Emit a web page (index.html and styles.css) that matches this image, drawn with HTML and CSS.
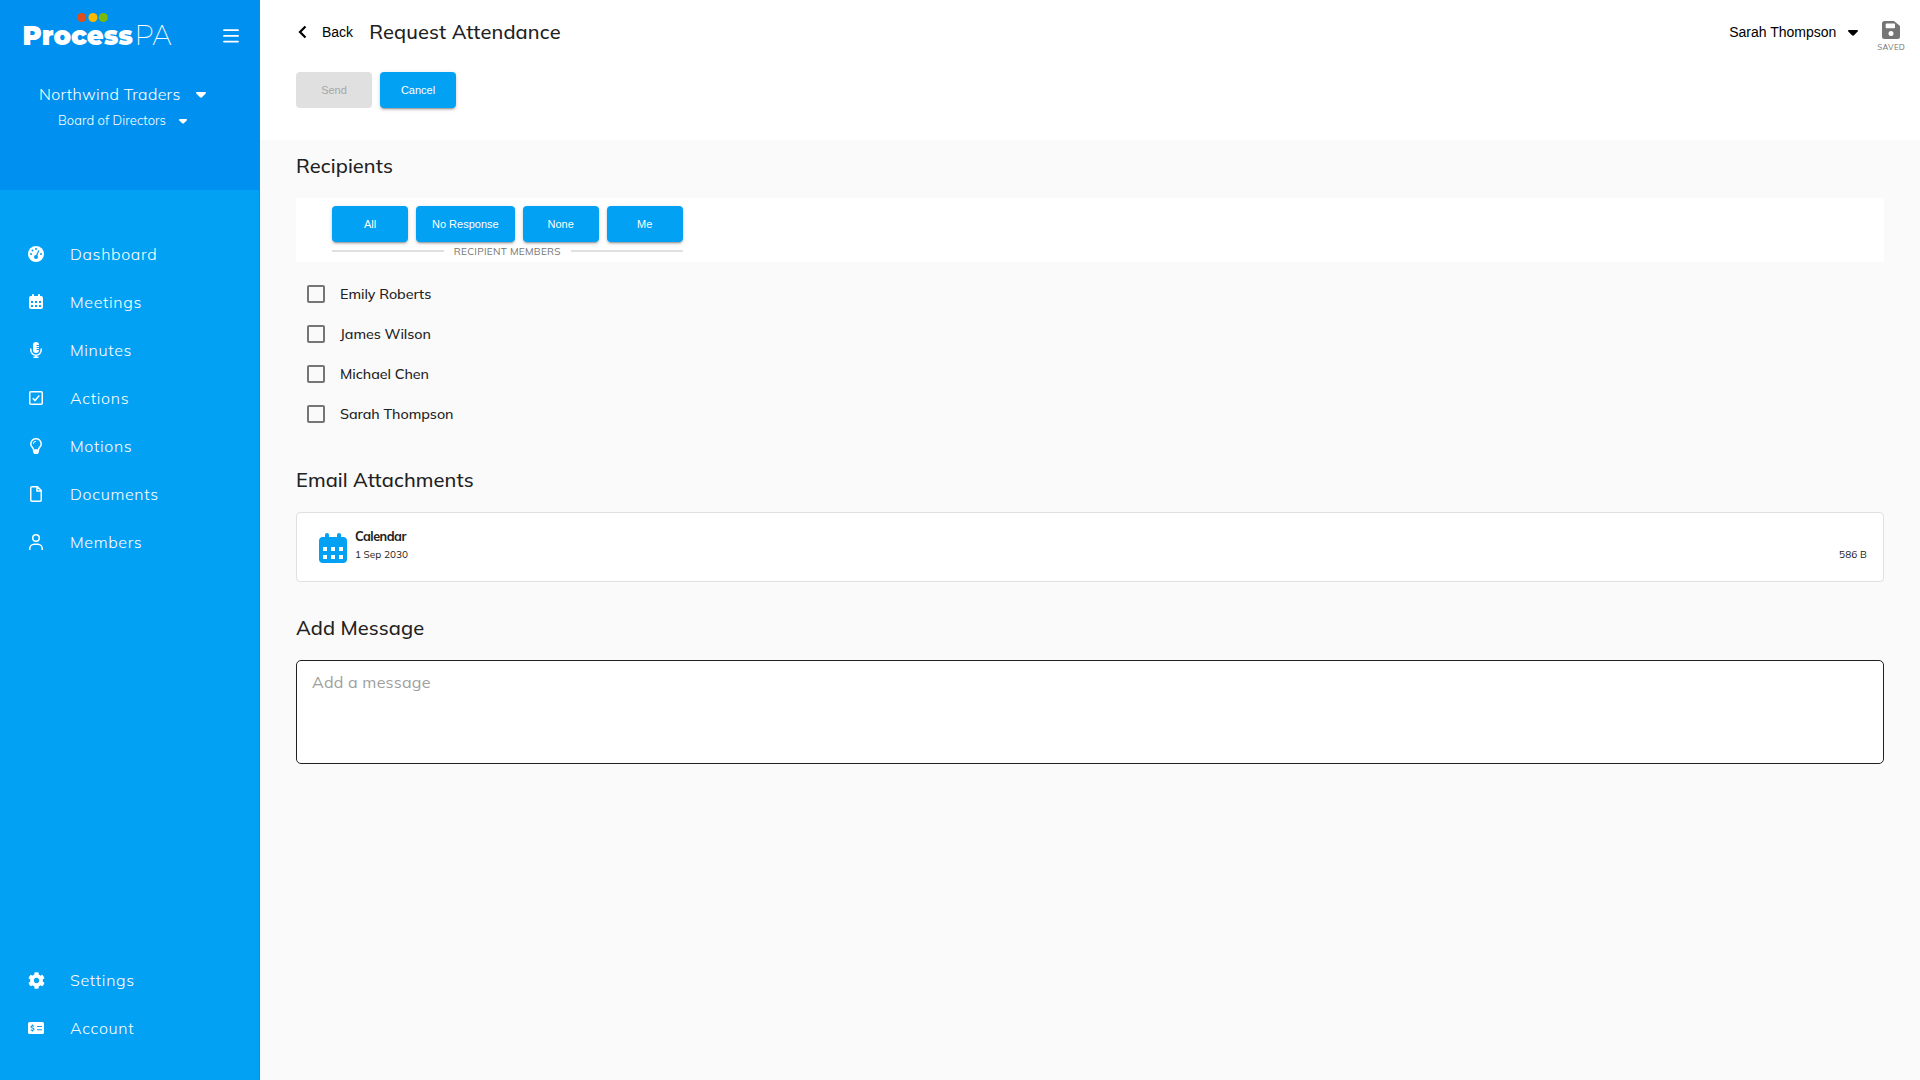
FILE: index.html
```html
<!DOCTYPE html>
<html lang="en">
<head>
<meta charset="utf-8">
<title>Request Attendance</title>
<link rel="stylesheet" href="styles.css">
</head>
<body>
<svg class="defs" aria-hidden="true">
  <symbol id="calendar" viewBox="0 0 28 30"><path fill-rule="evenodd" d="M6 4V2a2 2 0 0 1 4 0v2h8V2a2 2 0 0 1 4 0v2h2a4 4 0 0 1 4 4v18a4 4 0 0 1-4 4H4a4 4 0 0 1-4-4V8a4 4 0 0 1 4-4zM4 14v4h4v-4zm8 0v4h4v-4zm8 0v4h4v-4zM4 22v4h4v-4zm8 0v4h4v-4zm8 0v4h4v-4z"/></symbol>
  <symbol id="caret" viewBox="0 0 10 6"><path d="M1 0h8c1 0 1.300 1 .7 1.600l-3.700 3.700c-.6.6-1.400.6-2 0L.3 1.600C-.3 1 0 0 1 0z"/></symbol>
</svg>
<div class="app">
  <aside class="sidebar">
    <div class="brand">
      <div class="brand-bar">
        <svg class="logo" width="156" height="50" viewBox="0 0 156 50">
          <circle cx="60.700" cy="9.500" r="4.500" fill="#e04e1b"/><circle cx="72" cy="9.500" r="4.500" fill="#fdb900"/><circle cx="82.300" cy="9.500" r="4.500" fill="#7aba0a"/>
          <text class="logo-bold" x="1.500" y="36.500" textLength="110.500" lengthAdjust="spacingAndGlyphs">Process</text>
          <text class="logo-thin" x="113.500" y="36.500" textLength="37" lengthAdjust="spacingAndGlyphs">PA</text>
        </svg>
        <svg class="burger" width="16" height="14" viewBox="0 0 16 14"><path d="M1 1.200h14M1 6.900h14M1 12.600h14"/></svg>
      </div>
      <div class="org"><span>Northwind Traders</span><svg width="10" height="6"><use href="#caret"/></svg></div>
      <div class="board"><span>Board of Directors</span><svg width="8" height="5"><use href="#caret"/></svg></div>
    </div>
    <nav class="nav">
      <a><svg width="16" height="16" viewBox="0 0 16 16"><circle cx="8" cy="8" r="8"/><g class="cut"><circle cx="8" cy="3" r="1"/><circle cx="4.500" cy="4.500" r="1"/><circle cx="3" cy="8" r="1"/><circle cx="13" cy="8" r="1"/><circle cx="8" cy="11" r="2"/><path d="M7.700 10l2.700-6 1 .5-2.400 6z"/></g></svg><span>Dashboard</span></a>
      <a><svg class="lift" width="14" height="15"><use href="#calendar"/></svg><span>Meetings</span></a>
      <a><svg width="12" height="16" viewBox="0 0 12 16"><rect x="3" y="0" width="6" height="11" rx="3"/><path class="line" d="M.8 6.500V8a5.200 5.200 0 0 0 10.400 0V6.500M6 13v2.500M3.500 15.250h5"/><path class="cutline" d="M6.500 3.500H9M6.500 5.500H9M6.500 7.500H9"/></svg><span>Minutes</span></a>
      <a><svg width="14" height="14" viewBox="0 0 14 14"><rect class="line" x=".75" y=".75" width="12.500" height="12.500" rx="1"/><path class="line" d="M3.800 7.300l2.200 2.300 4.300-5"/></svg><span>Actions</span></a>
      <a><svg width="12" height="16" viewBox="0 0 12 16"><path class="line" d="M3.600 12C3.600 9.500.8 9 .8 5.900a5.200 5.200 0 0 1 10.400 0C11.200 9 8.400 9.500 8.400 12z"/><path class="line thin" d="M3.300 6A2.700 2.700 0 0 1 6 3.300"/><path d="M3 12h6v2l-1.200 2H4.200L3 14z"/></svg><span>Motions</span></a>
      <a><svg width="12" height="16" viewBox="0 0 12 16"><path class="line" d="M2 .75h5.500l3.750 3.750V14a1.250 1.250 0 0 1-1.250 1.250H2A1.250 1.250 0 0 1 .75 14V2A1.250 1.250 0 0 1 2 .75zM7 1v4h4"/></svg><span>Documents</span></a>
      <a><svg width="14" height="16" viewBox="0 0 14 16"><circle class="line" cx="7" cy="4" r="3.250"/><path class="line" d="M.75 16v-1.200A4.500 4.500 0 0 1 5.200 10.300h3.600a4.500 4.500 0 0 1 4.450 4.500V16"/></svg><span>Members</span></a>
      <a class="push"><svg width="17" height="17" viewBox="0 0 512 512"><path d="M487.400 315.700l-42.600-24.600c4.300-23.200 4.300-47 0-70.200l42.600-24.600c4.900-2.800 7.100-8.600 5.500-14-11.100-35.600-30-67.800-54.700-94.600-3.800-4.100-10-5.100-14.800-2.300L380.800 110c-17.900-15.400-38.500-27.300-60.800-35.100V25.800c0-5.600-3.900-10.500-9.400-11.700-36.700-8.200-74.300-7.800-109.200 0-5.500 1.200-9.400 6.100-9.400 11.700V75c-22.200 7.900-42.800 19.800-60.800 35.100L88.700 85.500c-4.900-2.800-11-1.900-14.800 2.300-24.700 26.700-43.600 58.900-54.700 94.600-1.700 5.400.6 11.200 5.500 14L67.300 221c-4.300 23.200-4.300 47 0 70.200l-42.600 24.600c-4.900 2.800-7.100 8.600-5.500 14 11.100 35.600 30 67.800 54.700 94.600 3.800 4.100 10 5.100 14.800 2.300l42.600-24.600c17.900 15.400 38.500 27.300 60.800 35.100v49.200c0 5.600 3.900 10.500 9.400 11.700 36.700 8.200 74.300 7.800 109.200 0 5.500-1.200 9.400-6.100 9.400-11.700v-49.200c22.200-7.900 42.800-19.800 60.800-35.100l42.600 24.600c4.900 2.800 11 1.900 14.800-2.300 24.700-26.700 43.600-58.900 54.700-94.600 1.500-5.500-.7-11.300-5.600-14.100zM256 336c-44.100 0-80-35.900-80-80s35.900-80 80-80 80 35.900 80 80-35.900 80-80 80z"/></svg><span>Settings</span></a>
      <a><svg width="16" height="12" viewBox="0 0 16 12"><rect width="16" height="12" rx="1.500"/><path class="cutline" d="M9 4.500h5M9 7.700h5M6 4.300C5 3.600 3 3.700 3 4.800 3 6.200 6 5.800 6 7.300 6 8.500 4 8.600 2.800 7.800M4.500 2.500v1M4.500 8.500v1"/></svg><span>Account</span></a>
    </nav>
  </aside>
  <main class="main">
    <header class="header">
      <div class="title-row">
        <svg class="chevron" width="9" height="14" viewBox="0 0 9 14"><path d="M7.500 1.500L2 7l5.500 5.500"/></svg>
        <span class="back">Back</span>
        <h1>Request Attendance</h1>
        <div class="user">Sarah Thompson<svg width="10" height="6"><use href="#caret"/></svg></div>
        <div class="saved"><svg width="18" height="18" viewBox="0 0 18 18"><path fill-rule="evenodd" d="M2.500 0H12l6 5v10.500a2.500 2.500 0 0 1-2.500 2.500h-13A2.500 2.500 0 0 1 0 15.500v-13A2.500 2.500 0 0 1 2.500 0zM4.500 2.600a.8.8 0 0 0-.8.800v3a.8.8 0 0 0 .8.800h7.700a.8.8 0 0 0 .8-.8v-3a.8.8 0 0 0-.8-.8zM9 10a2.500 2.500 0 1 0 0 5 2.500 2.500 0 0 0 0-5z"/></svg><span>SAVED</span></div>
      </div>
      <div class="buttons"><button class="btn" disabled>Send</button><button class="btn">Cancel</button></div>
    </header>
    <section class="content">
      <h2>Recipients</h2>
      <div class="filter">
        <div class="filter-group">
          <div class="buttons"><button class="btn">All</button><button class="btn">No Response</button><button class="btn">None</button><button class="btn">Me</button></div>
          <div class="legend"><span>RECIPIENT MEMBERS</span></div>
        </div>
      </div>
      <div class="people">
        <label><i class="box"></i><span>Emily Roberts</span></label>
        <label><i class="box"></i><span>James Wilson</span></label>
        <label><i class="box"></i><span>Michael Chen</span></label>
        <label><i class="box"></i><span>Sarah Thompson</span></label>
      </div>
      <h2 class="spaced">Email Attachments</h2>
      <div class="card">
        <svg width="28" height="30"><use href="#calendar"/></svg>
        <div class="file"><b>Calendar</b><span>1 Sep 2030</span></div>
        <span class="size">586 B</span>
      </div>
      <h2 class="spaced">Add Message</h2>
      <div class="message"><span>Add a message</span></div>
    </section>
  </main>
</div>
</body>
</html>
```
FILE: styles.css
```css
* { box-sizing: border-box; }
body { margin: 0; font-family: Muli, Mulish, Lato, sans-serif; color: #212121; background: #fafafa; }
svg { display: block; flex: none; }
h1, h2 { margin: 0; font-size: 20px; font-weight: 500; line-height: 28px; width: max-content; letter-spacing: .09px; }
h1 { letter-spacing: .14px; }
.defs { position: absolute; width: 0; height: 0; }
.app { display: flex; height: 1080px; }

.sidebar { display: flex; flex-direction: column; width: 260px; background: #02a1f3; border-right: 1px solid #0494df; color: #fff; fill: #fff; }
.brand { height: 190px; background: #0091f0; margin-right: -1px; }
.brand-bar { display: flex; height: 61px; padding: 8px 21px 0 21px; justify-content: space-between; align-items: flex-start; }
.logo-bold { font: 900 27.500px Montserrat, Muli, Mulish, Inter, sans-serif; }
.logo-thin { font: 200 27.500px Montserrat, Muli, Mulish, Lato, sans-serif; }
.burger { margin-top: 21px; stroke: #fff; stroke-width: 1.800; stroke-linecap: round; }
.org, .board { display: flex; align-items: center; }
.org { height: 28px; margin-top: 19px; padding-left: 39px; font-size: 16px; font-weight: 360; gap: 15px; }
.org span { letter-spacing: .3px; }
.org svg { margin-top: 2px; }
.board { height: 24px; padding-left: 58px; font-size: 13px; font-weight: 360; gap: 13px; }
.board span { letter-spacing: .06px; }
.board svg { margin-top: 2px; }
.nav { flex: 1; display: flex; flex-direction: column; padding: 40px 0 28px; font-size: 16px; font-weight: 360; }
.nav a { display: grid; grid-template-columns: 72px 1fr; height: 48px; align-items: center; }
.nav svg { justify-self: center; }
.nav .lift { margin-bottom: 1px; }
.nav a span { justify-self: start; margin-left: -2px; letter-spacing: .66px; }
.nav .push { margin-top: auto; }
.line { fill: none; stroke: #fff; stroke-width: 1.500; }
.thin { stroke-width: 1; }
.cut { fill: #02a1f3; }
.cutline { fill: none; stroke: #02a1f3; stroke-width: 1.100; }

.main { flex: 1; }
.header { height: 140px; background: #fff; padding: 0 16px 0 36px; }
.title-row { display: flex; height: 72px; padding-top: 18px; align-items: flex-start; }
.chevron { margin: 7px 0 0 2px; fill: none; stroke: #000; stroke-width: 2.200; }
.back { margin: 6px 16px 0 15px; font: 14px/16px "Liberation Sans", sans-serif; color: #000; }
.user { margin: 6px 19px 0 auto; display: flex; align-items: center; gap: 12px; font: 14px/16px "Liberation Sans", sans-serif; color: #000; }
.user svg { margin-top: 2px; }
.saved { display: flex; flex-direction: column; align-items: center; margin: 3px -1px 0 0; gap: 3px; fill: #757575; color: #757575; font-size: 8px; line-height: 10px; letter-spacing: .2px; }
.buttons { display: flex; gap: 8px; }
.btn { min-width: 76px; height: 36px; padding: 0 16px; border: 0; border-radius: 4px; background: #02a1f3; color: #fff; font: 11px "Liberation Sans", sans-serif; box-shadow: 0 3px 1px -2px rgba(0,0,0,.2), 0 2px 2px rgba(0,0,0,.14), 0 1px 5px rgba(0,0,0,.12); }
.btn:disabled { background: #e0e0e0; color: #a6a6a6; box-shadow: none; }

.content { padding: 12px 36px 0; }
.filter { display: flex; height: 64px; margin-top: 18px; padding: 8px 36px; background: #fff; }
.legend { display: flex; align-items: center; gap: 10px; height: 18px; font-size: 10px; color: #757575; letter-spacing: .28px; }
.legend::before, .legend::after { content: ""; flex: 1; height: 2px; background: #e0e0e0; }
.people { padding: 12px 0 0 11px; }
.people label { display: flex; align-items: center; gap: 15px; height: 40px; font-size: 14.300px; font-weight: 500; letter-spacing: -.04px; }
.people span { line-height: 18px; margin-bottom: 1px; }
.box { width: 18px; height: 18px; border: 2px solid #757575; border-radius: 2px; }
.spaced { margin-top: 32px; }
.card { display: flex; height: 70px; margin-top: 18px; padding: 0 16px 0 22px; border: 1px solid #e0e0e0; border-radius: 4px; background: #fff; fill: #02a1f3; }
.card svg { margin-top: 20px; }
.file { display: flex; flex-direction: column; align-items: flex-start; margin: 14px 0 0 8px; }
.file b { font-size: 12.700px; line-height: 19px; letter-spacing: -.5px; }
.file span, .size { font-size: 10px; line-height: 18px; }
.size { margin: 33px 0 0 auto; letter-spacing: .1px; }
.message { height: 104px; margin-top: 18px; padding: 9px 15px; border: 1px solid #212121; border-radius: 5px; background: #fff; color: #9e9e9e; font-size: 16px; line-height: 24px; letter-spacing: .25px; }
```
